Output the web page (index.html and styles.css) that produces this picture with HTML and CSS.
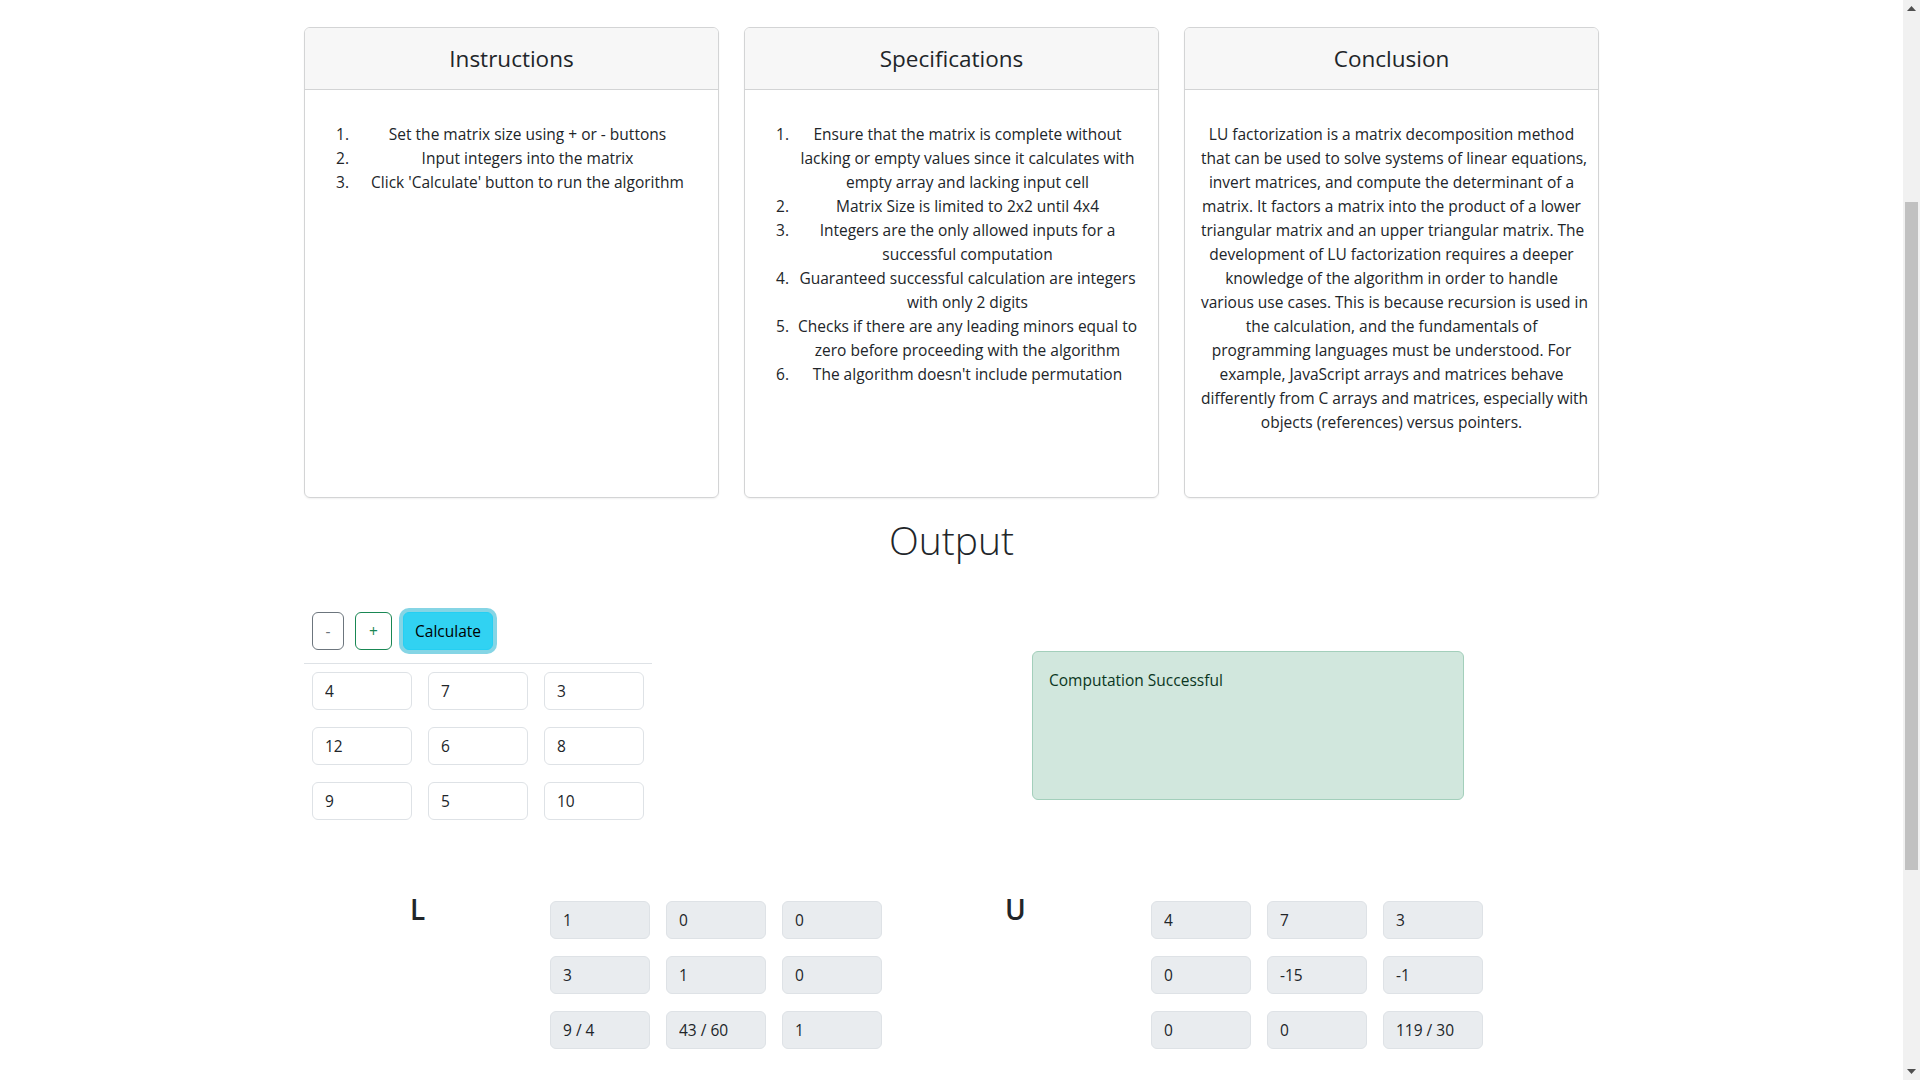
FILE: index.html
```html
<!DOCTYPE html>
<html lang="en">
<head>
<meta charset="utf-8">
<title>LU Factorization</title>
<link rel="stylesheet" href="styles.css">
</head>
<body>
<main class="container">
  <section class="cards">
    <article class="card">
      <header class="card-header"><h4 class="card-title">Instructions</h4></header>
      <div class="card-body">
        <ol class="steps">
          <li>Set the matrix size using + or - buttons</li>
          <li>Input integers into the matrix</li>
          <li>Click 'Calculate' button to run the algorithm</li>
        </ol>
      </div>
    </article>
    <article class="card">
      <header class="card-header"><h4 class="card-title">Specifications</h4></header>
      <div class="card-body">
        <ol class="steps">
          <li>Ensure that the matrix is complete without<br>lacking or empty values since it calculates with<br>empty array and lacking input cell</li>
          <li>Matrix Size is limited to 2x2 until 4x4</li>
          <li>Integers are the only allowed inputs for a<br>successful computation</li>
          <li>Guaranteed successful calculation are integers<br>with only 2 digits</li>
          <li>Checks if there are any leading minors equal to<br>zero before proceeding with the algorithm</li>
          <li>The algorithm doesn't include permutation</li>
        </ol>
      </div>
    </article>
    <article class="card">
      <header class="card-header"><h4 class="card-title">Conclusion</h4></header>
      <div class="card-body">
        <p class="summary">LU factorization is a matrix decomposition method<br>that can be used to solve systems of linear equations,<br>invert matrices, and compute the determinant of a<br>matrix. It factors a matrix into the product of a lower<br>triangular matrix and an upper triangular matrix. The<br>development of LU factorization requires a deeper<br>knowledge of the algorithm in order to handle<br>various use cases. This is because recursion is used in<br>the calculation, and the fundamentals of<br>programming languages must be understood. For<br>example, JavaScript arrays and matrices behave<br>differently from C arrays and matrices, especially with<br>objects (references) versus pointers.</p>
      </div>
    </article>
  </section>

  <h2 class="output-title">Output</h2>

  <section class="workspace">
    <div class="panel">
      <div class="controls">
        <button class="btn btn-minus" type="button">-</button>
        <button class="btn btn-plus" type="button">+</button>
        <button class="btn btn-calc" type="button">Calculate</button>
      </div>
      <hr class="divider">
      <div class="matrix">
        <input class="cell" type="text" value="4">
        <input class="cell" type="text" value="7">
        <input class="cell" type="text" value="3">
        <input class="cell" type="text" value="12">
        <input class="cell" type="text" value="6">
        <input class="cell" type="text" value="8">
        <input class="cell" type="text" value="9">
        <input class="cell" type="text" value="5">
        <input class="cell" type="text" value="10">
      </div>
    </div>
    <div class="alert">Computation Successful</div>
  </section>

  <section class="results">
    <div class="result">
      <h3 class="result-label label-l">L</h3>
      <div class="matrix result-matrix">
        <input class="cell readonly" type="text" value="1" readonly>
        <input class="cell readonly" type="text" value="0" readonly>
        <input class="cell readonly" type="text" value="0" readonly>
        <input class="cell readonly" type="text" value="3" readonly>
        <input class="cell readonly" type="text" value="1" readonly>
        <input class="cell readonly" type="text" value="0" readonly>
        <input class="cell readonly" type="text" value="9 / 4" readonly>
        <input class="cell readonly" type="text" value="43 / 60" readonly>
        <input class="cell readonly" type="text" value="1" readonly>
      </div>
    </div>
    <div class="result result-u">
      <h3 class="result-label label-u">U</h3>
      <div class="matrix result-matrix">
        <input class="cell readonly" type="text" value="4" readonly>
        <input class="cell readonly" type="text" value="7" readonly>
        <input class="cell readonly" type="text" value="3" readonly>
        <input class="cell readonly" type="text" value="0" readonly>
        <input class="cell readonly" type="text" value="-15" readonly>
        <input class="cell readonly" type="text" value="-1" readonly>
        <input class="cell readonly" type="text" value="0" readonly>
        <input class="cell readonly" type="text" value="0" readonly>
        <input class="cell readonly" type="text" value="119 / 30" readonly>
      </div>
    </div>
  </section>
</main>

<div class="scrollbar" aria-hidden="true">
  <div class="scroll-arrow">
    <svg width="9" height="5" viewBox="0 0 9 5"><polygon points="0,5 9,5 4.5,0" fill="#505050"/></svg>
  </div>
  <div class="scroll-track"><div class="scroll-thumb"></div></div>
  <div class="scroll-arrow">
    <svg width="9" height="5" viewBox="0 0 9 5"><polygon points="0,0 9,0 4.5,5" fill="#505050"/></svg>
  </div>
</div>
</body>
</html>
```

FILE: styles.css
```css
body {
  margin: 0;
  padding-right: 17px;
  font-family: "Open Sans", "Noto Sans", sans-serif;
  font-size: 15.5px;
  line-height: 24px;
  color: #212529;
  background: #fff;
}

.container {
  width: 1295px;
  margin: 0 auto;
  padding-bottom: 40px;
}

/* ---------- cards ---------- */
.cards {
  display: grid;
  grid-template-columns: repeat(3, 1fr);
  gap: 25px;
  padding-top: 27px;
}

.card {
  min-height: 471px;
  box-sizing: border-box;
  border: 1px solid #d3d4d5;
  border-radius: 6px;
  box-shadow: 0 1px 2px rgba(0, 0, 0, 0.06);
  overflow: hidden;
  display: flex;
  flex-direction: column;
}

.card-header {
  height: 61px;
  background: #f7f7f7;
  border-bottom: 1px solid #d3d4d5;
  display: flex;
  align-items: center;
  justify-content: center;
}

.card-title {
  margin: 0;
  font-size: 22.5px;
  font-weight: 400;
  line-height: 28px;
}

.card-body {
  padding: 32px 16px 16px;
}

.steps {
  margin: 0;
  padding-left: 32px;
}

.steps li {
  text-align: center;
  white-space: nowrap;
}

.summary {
  margin: 0;
  text-align: center;
  white-space: nowrap;
}

/* ---------- output ---------- */
.output-title {
  margin: 18px 0 48px;
  text-align: center;
  font-size: 39px;
  font-weight: 300;
  line-height: 48px;
}

.workspace {
  display: flex;
  align-items: flex-start;
}

.panel {
  width: 348px;
}

.controls {
  display: flex;
  gap: 11px;
  padding-left: 8px;
}

.btn {
  height: 38px;
  padding: 0;
  font-family: inherit;
  font-size: 15.5px;
  line-height: 24px;
  text-align: center;
  border: 1px solid transparent;
  border-radius: 6px;
  background: #fff;
}

.btn-minus {
  width: 32px;
  color: #6c757d;
  border-color: #6c757d;
}

.btn-plus {
  width: 37px;
  color: #198754;
  border-color: #198754;
}

.btn-calc {
  width: 90px;
  color: #000;
  background: #31d2f2;
  border-color: #25cff2;
  box-shadow: 0 0 0 4px rgba(11, 172, 204, 0.5);
}

.divider {
  margin: 13px 0 8px;
  height: 0;
  border: 0;
  border-top: 1px solid #dee2e6;
}

.matrix {
  display: grid;
  grid-template-columns: repeat(3, 100px);
  column-gap: 16px;
  row-gap: 17px;
  padding-left: 8px;
}

.cell {
  width: 100px;
  height: 38px;
  box-sizing: border-box;
  margin: 0;
  padding: 6px 12px;
  font-family: inherit;
  font-size: 15.5px;
  line-height: 24px;
  color: #212529;
  background: #fff;
  border: 1px solid #dee2e6;
  border-radius: 6px;
  outline: none;
}

.cell.readonly {
  background: #e9ecef;
}

.alert {
  width: 432px;
  height: 149px;
  box-sizing: border-box;
  margin: 39px 0 0 380px;
  padding: 16px;
  color: #0a3622;
  background: #d1e7dd;
  border: 1px solid #a3cfbb;
  border-radius: 6px;
}

/* ---------- results ---------- */
.results {
  display: flex;
  align-items: flex-start;
  margin-top: 73px;
  padding-left: 106px;
}

.result {
  display: flex;
  align-items: flex-start;
}

.result-u {
  margin-left: 123px;
}

.result-label {
  margin: 0;
  font-size: 28px;
  font-weight: 600;
  line-height: 33.6px;
}

.label-l {
  width: 140px;
}

.label-u {
  width: 146px;
}

.result-matrix {
  padding-left: 0;
  margin-top: 8px;
}

/* ---------- window scrollbar (page scrolled part-way) ---------- */
.scrollbar {
  position: fixed;
  top: 0;
  right: 0;
  bottom: 0;
  width: 17px;
  background: #f1f1f1;
  display: flex;
  flex-direction: column;
}

.scroll-arrow {
  height: 17px;
  display: flex;
  align-items: center;
  justify-content: center;
}

.scroll-arrow svg {
  display: block;
}

.scroll-track {
  flex: 1;
  padding: 185px 2px 0;
}

.scroll-thumb {
  height: 668px;
  background: #c1c1c1;
}
```
